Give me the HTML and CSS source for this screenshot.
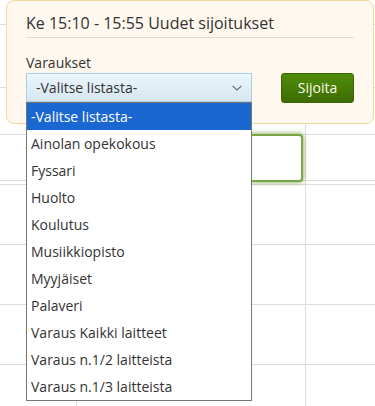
FILE: index.html
```html
<!DOCTYPE html>
<html lang="fi">
<head>
<meta charset="utf-8">
<title>Uudet sijoitukset</title>
<link rel="stylesheet" href="styles.css">
</head>
<body>
<div class="calendar">
  <div class="cal-row r1"><div class="cell"></div><div class="cell"></div><div class="cell"></div></div>
  <div class="cal-row r2"><div class="cell"></div><div class="cell"></div><div class="cell"></div></div>
  <div class="cal-row r3"><div class="cell"></div><div class="cell"></div><div class="cell"></div></div>
  <div class="cal-row r4"><div class="cell"></div><div class="cell"></div><div class="cell"></div></div>
  <div class="cal-row r5"><div class="cell"></div><div class="cell"></div><div class="cell"></div></div>
  <div class="cal-row r6"><div class="cell"></div><div class="cell"></div><div class="cell"></div></div>
  <div class="cal-row r6"><div class="cell"></div><div class="cell"></div><div class="cell"></div></div>
  <div class="cal-row r6"><div class="cell"></div><div class="cell"></div><div class="cell"></div></div>
  <div class="cal-row r6"><div class="cell"></div><div class="cell"></div><div class="cell"></div></div>
  <div class="event"></div>
</div>

<div class="popup">
  <h2 class="popup-title">Ke 15:10 - 15:55 Uudet sijoitukset</h2>
  <div class="field-label">Varaukset</div>
  <div class="form-row">
    <div class="select">
      <span class="select-value">-Valitse listasta-</span>
      <svg class="chevron" width="10" height="6" viewBox="0 0 10 6"><polyline points="0.5,0.8 5,5 9.5,0.8" fill="none" stroke="#666" stroke-width="1.1"/></svg>
      <ul class="dropdown">
        <li class="option selected">-Valitse listasta-</li>
        <li class="option">Ainolan opekokous</li>
        <li class="option">Fyssari</li>
        <li class="option">Huolto</li>
        <li class="option">Koulutus</li>
        <li class="option">Musiikkiopisto</li>
        <li class="option">Myyjäiset</li>
        <li class="option">Palaveri</li>
        <li class="option">Varaus Kaikki laitteet</li>
        <li class="option">Varaus n.1/2 laitteista</li>
        <li class="option">Varaus n.1/3 laitteista</li>
      </ul>
    </div>
    <button class="btn-place">Sijoita</button>
  </div>
</div>
</body>
</html>
```
FILE: styles.css
```css
* { box-sizing: border-box; }

html, body {
  margin: 0;
  padding: 0;
  background: #fff;
  font-family: "Open Sans", "DejaVu Sans", sans-serif;
  color: #333;
  overflow: hidden;
}

body {
  position: relative;
  width: 375px;
  height: 406px;
}

/* background calendar grid */
.calendar {
  display: flex;
  flex-direction: column;
  position: relative;
}

.cal-row {
  display: grid;
  grid-template-columns: 77px 229px 1fr;
  border-bottom: 1px solid #dcdcdc;
}

.cell { border-right: 1px solid #dcdcdc; }
.cell:last-child { border-right: none; }

.r1 { height: 25px; }
.r2 { height: 63px; }
.r3 { height: 47px; }
.r4 { height: 46px; }
.r5 { height: 4px; }
.r6 { height: 60px; }

.event {
  position: absolute;
  left: 220px;
  top: 134px;
  width: 83px;
  height: 48px;
  background: #fff;
  border: 2px solid #79a546;
  border-radius: 4px;
  box-shadow: 0 0 4px 1px rgba(120, 165, 65, 0.75);
}

/* popup */
.popup {
  position: absolute;
  left: 6px;
  top: 0;
  width: 368px;
  height: 124px;
  padding: 11px 19px 0 19px;
  background: #fff8ee;
  border: 1px solid #f5d79e;
  border-radius: 8px;
}

.popup-title {
  margin: 0;
  font-size: 16px;
  font-weight: normal;
  line-height: 22px;
  padding-bottom: 3px;
  border-bottom: 1px solid #dcdcdc;
  color: #333;
}

.field-label {
  margin-top: 15px;
  font-size: 14px;
  line-height: 20px;
  color: #333;
}

.form-row {
  display: flex;
  justify-content: space-between;
  align-items: flex-start;
}

.select {
  position: relative;
  width: 226px;
  height: 29px;
  display: flex;
  align-items: center;
  justify-content: space-between;
  padding: 0 9px 0 9px;
  border: 1px solid #a8d0e1;
  background: linear-gradient(#ebf6fd, #d7e6ef);
  font-size: 14px;
  color: #333;
}

.select-value { line-height: 20px; }

.chevron { display: block; margin-top: 1px; }

.dropdown {
  position: absolute;
  left: -1px;
  top: 28px;
  width: 226px;
  margin: 0;
  padding: 0;
  list-style: none;
  background: #fff;
  border: 1px solid #767676;
  z-index: 2;
}

.option {
  height: 27px;
  line-height: 27px;
  padding-left: 4px;
  font-size: 14px;
  color: #333;
  white-space: nowrap;
}

.option.selected {
  background: #1a67d2;
  color: #fff;
}

.btn-place {
  width: 73px;
  height: 30px;
  margin: 0;
  padding: 0;
  border: 1px solid #3b6402;
  border-radius: 3px;
  background: linear-gradient(#4f8d0b, #3e6c03);
  color: #fdfde6;
  font-family: "Open Sans", "DejaVu Sans", sans-serif;
  font-size: 14px;
  line-height: 28px;
  cursor: pointer;
}
```
